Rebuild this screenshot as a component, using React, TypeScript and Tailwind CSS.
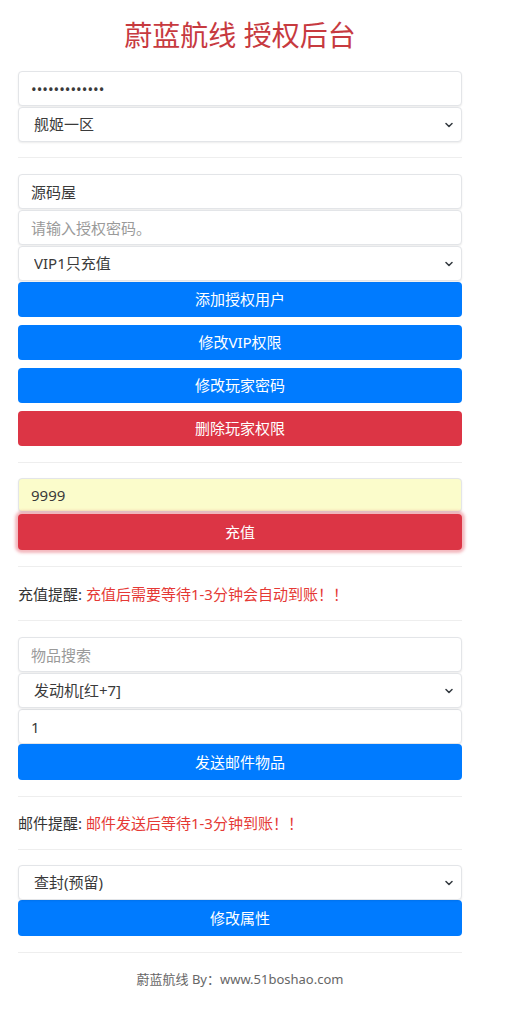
import type { ReactNode } from 'react'

const font = { fontFamily: '"Noto Sans", "Noto Sans CJK SC", sans-serif' }

function Chevron() {
  return (
    <svg className="pointer-events-none absolute right-[9px] top-1/2 h-[8px] w-[8px] -translate-y-1/2" viewBox="0 0 16 16">
      <path d="M2 5l6 6 6-6" fill="none" stroke="#343a40" strokeWidth="3" strokeLinecap="round" strokeLinejoin="round" />
    </svg>
  )
}

const fieldCls =
  'block h-[35px] w-full rounded-[4px] border border-[#e3e5e8] bg-white px-[12px] text-[15px] text-[#3a3a3a] shadow-[0_1px_2px_rgba(0,0,0,0.08)] outline-none placeholder:text-[#9a9a9a]'

function Input({ value, placeholder, type = 'text', className = '' }: { value?: string; placeholder?: string; type?: string; className?: string }) {
  return <input type={type} readOnly defaultValue={value} placeholder={placeholder} className={`${fieldCls} ${className}`} style={font} />
}

function Select({ value, className = '' }: { value: string; className?: string }) {
  return (
    <div className={`relative ${className}`}>
      <select className={`${fieldCls} appearance-none pl-[15px]`} style={font} defaultValue={value}>
        <option>{value}</option>
      </select>
      <Chevron />
    </div>
  )
}

function Button({ children, color = 'blue', className = '' }: { children: ReactNode; color?: 'blue' | 'red'; className?: string }) {
  const bg = color === 'blue' ? 'bg-[#007bff]' : 'bg-[#dc3545]'
  return (
    <button className={`flex h-[35px] w-full items-center justify-center rounded-[4px] ${bg} text-[15px] text-white ${className}`} style={font}>
      {children}
    </button>
  )
}

function Rule({ className = '' }: { className?: string }) {
  return <div className={`h-px w-full bg-[#eeeeee] ${className}`} />
}

export default function App() {
  return (
    <div className="min-h-[1024px] bg-white" style={font}>
      <div className="ml-[18px] w-[444px] pt-[17px]">
        <h1 className="text-center text-[28px] leading-[36px] text-[#c73a3f]">蔚蓝航线 授权后台</h1>

        <Input type="password" value="1234567890123" className="mt-[18px]" />
        <Select value="舰姬一区" className="mt-px" />

        <Rule className="mt-[15px]" />

        <Input value="源码屋" className="mt-[16px]" />
        <Input placeholder="请输入授权密码。" className="mt-px" />
        <Select value="VIP1只充值" className="mt-px" />
        <Button className="mt-px">添加授权用户</Button>
        <Button className="mt-[8px]">修改VIP权限</Button>
        <Button className="mt-[8px]">修改玩家密码</Button>
        <Button color="red" className="mt-[8px]">删除玩家权限</Button>

        <Rule className="mt-[16px]" />

        <Input value="9999" className="mt-[15px] !h-[34px] !bg-[#fbfccb]" />
        <Button color="red" className="mt-[2px] h-[36px] shadow-[0_0_3px_3px_rgba(220,53,69,0.35)]">充值</Button>

        <Rule className="mt-[16px]" />

        <p className="mt-[17px] text-[15px] leading-[20px] text-[#333]">
          充值提醒: <span className="text-[#e53935]">充值后需要等待1-3分钟会自动到账！！</span>
        </p>

        <Rule className="mt-[16px]" />

        <Input placeholder="物品搜索" className="mt-[16px]" />
        <Select value="发动机[红+7]" className="mt-px" />
        <Input value="1" className="mt-px" />
        <Button className="mt-0 h-[36px]">发送邮件物品</Button>

        <Rule className="mt-[16px]" />

        <p className="mt-[16px] text-[15px] leading-[20px] text-[#333]">
          邮件提醒: <span className="text-[#e53935]">邮件发送后等待1-3分钟到账！！</span>
        </p>

        <Rule className="mt-[16px]" />

        <Select value="查封(预留)" className="mt-[15px]" />
        <Button className="h-[36px]">修改属性</Button>

        <Rule className="mt-[16px]" />

        <p className="mt-[17px] text-center text-[13px] leading-[18px] text-[#666]">蔚蓝航线 By：www.51boshao.com</p>
      </div>
    </div>
  )
}
